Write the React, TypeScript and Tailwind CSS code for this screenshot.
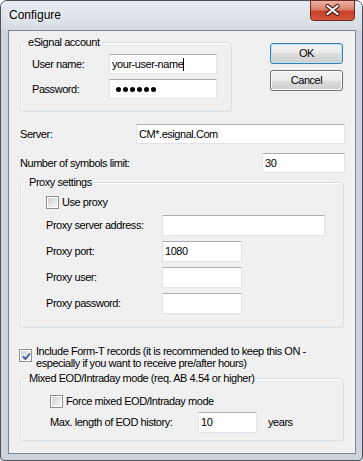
import type { ReactNode } from "react";

/**
 * Configure dialog (Windows 7 basic theme look)
 */

function TextBox({ className, children }: { className: string; children?: ReactNode }) {
  return (
    <div
      className={`flex items-center bg-white border border-[#e2e3ea] border-t-[#abadb3] px-[2px] text-black ${className}`}
    >
      {children}
    </div>
  );
}

function CheckBox({ checked = false }: { checked?: boolean }) {
  return (
    <div className="w-[13px] h-[13px] shrink-0 border border-[#8e8f8f] bg-white p-px">
      <div className="w-full h-full bg-[linear-gradient(135deg,#cdd1d6,#f6f6f6)] relative">
        {checked && (
          <svg width="11" height="11" viewBox="0 0 11 11" className="absolute inset-0">
            <path d="M2 5.5 L4.5 8 L9 2.5" fill="none" stroke="#3c5596" strokeWidth="1.8" />
          </svg>
        )}
      </div>
    </div>
  );
}

function PushButton({ label, isDefault = false }: { label: string; isDefault?: boolean }) {
  return (
    <div
      className={`w-[73px] h-[21px] rounded-[3px] border flex items-center justify-center bg-[linear-gradient(#f2f2f2_0%,#ebebeb_50%,#dddddd_50%,#cfcfcf_100%)] ${
        isDefault ? "border-[#3c7fb1] shadow-[inset_0_0_0_1px_#b6e4f9]" : "border-[#707070] shadow-[inset_0_0_0_1px_#fcfcfc]"
      }`}
    >
      {label}
    </div>
  );
}

function GroupBox({
  title,
  legendClass = "ml-[6px]",
  className,
  children,
}: {
  title: string;
  legendClass?: string;
  className: string;
  children: ReactNode;
}) {
  return (
    <fieldset className={`border border-[#d5dfe5] rounded-[3px] shadow-[inset_1px_1px_0_#fff] ${className}`}>
      <legend className={`px-[2px] leading-[13px] ${legendClass}`}>{title}</legend>
      {children}
    </fieldset>
  );
}

export default function App() {
  return (
    <div className="w-[363px] h-[461px] font-['Liberation_Sans',Arial,sans-serif] text-[11px] leading-[13px] tracking-[-0.45px] text-black">
      <div className="w-full h-full border border-[#4b5058] rounded-t-[7px] rounded-b-[4px] bg-[#ccd3da] flex flex-col">
        {/* Title bar */}
        <div className="h-[29px] flex justify-between rounded-t-[6px] bg-[linear-gradient(#e7ecf1,#d5dbe2)]">
          <div className="pl-[8px] self-center text-[12px] leading-[15px] tracking-normal [text-shadow:0_0_6px_#fff,0_0_10px_#fff]">
            Configure
          </div>
          <div className="-mt-px mr-[7px] w-[45px] h-[21px] rounded-b-[4px] border border-[#6b2b21] bg-[linear-gradient(#eab3a6_0%,#dd806c_45%,#c8402a_55%,#d3583e_100%)]">
            <svg width="43" height="19" viewBox="0 0 43 19">
              <path d="M16.5 5 L26.5 13 M26.5 5 L16.5 13" stroke="#4a1c14" strokeWidth="4.2" strokeLinecap="round" />
              <path d="M16.5 5 L26.5 13 M26.5 5 L16.5 13" stroke="#ffffff" strokeWidth="2.2" strokeLinecap="round" />
            </svg>
          </div>
        </div>

        {/* Client area */}
        <div className="ml-[7px] w-[348px] h-[424px] border border-[#7b8794] bg-[#f0f0f0] flex flex-col">
          {/* Account + buttons */}
          <div className="flex items-start mt-[5px]">
            <GroupBox title="eSignal account" legendClass="ml-[5px]" className="ml-[11px] w-[212px]">
              <div className="pt-[5px] pl-[11px] pb-[12px] flex flex-col gap-[5px]">
                <div className="flex items-center h-[20px]">
                  <div className="w-[77px]">User name:</div>
                  <TextBox className="w-[108px] h-[20px]">
                    <span>your-user-name</span>
                    <span className="w-px h-[13px] bg-black" />
                  </TextBox>
                </div>
                <div className="flex items-center h-[20px]">
                  <div className="w-[77px]">Password:</div>
                  <TextBox className="w-[108px] h-[20px] pl-[6px] gap-[2px]">
                    {[0, 1, 2, 3, 4, 5].map((i) => (
                      <div key={i} className="w-[5px] h-[5px] rounded-full bg-black" />
                    ))}
                  </TextBox>
                </div>
              </div>
            </GroupBox>
            <div className="ml-[38px] mt-[7px] flex flex-col gap-[6px]">
              <PushButton label="OK" isDefault />
              <PushButton label="Cancel" />
            </div>
          </div>

          {/* Server */}
          <div className="flex items-center mt-[12px] ml-[11px]">
            <div className="w-[116px]">Server:</div>
            <TextBox className="w-[209px] h-[20px]">CM*.esignal.Com</TextBox>
          </div>

          {/* Symbols limit */}
          <div className="flex items-center mt-[9px] ml-[11px]">
            <div className="w-[242px]">Number of symbols limit:</div>
            <TextBox className="w-[83px] h-[20px]">30</TextBox>
          </div>

          {/* Proxy settings */}
          <GroupBox title="Proxy settings" className="mt-[3px] ml-[11px] w-[324px]">
            <div className="pt-[7px] pl-[25px] pb-[13px] flex flex-col">
              <div className="flex items-center h-[13px] gap-[3px]">
                <CheckBox />
                <span>Use proxy</span>
              </div>
              <div className="mt-[6px] flex flex-col gap-[5px]">
                <div className="flex items-center h-[21px]">
                  <div className="w-[116px]">Proxy server address:</div>
                  <TextBox className="w-[163px] h-[21px]" />
                </div>
                <div className="flex items-center h-[21px]">
                  <div className="w-[116px]">Proxy port:</div>
                  <TextBox className="w-[80px] h-[21px]">1080</TextBox>
                </div>
                <div className="flex items-center h-[21px]">
                  <div className="w-[116px]">Proxy user:</div>
                  <TextBox className="w-[80px] h-[21px]" />
                </div>
                <div className="flex items-center h-[21px]">
                  <div className="w-[116px]">Proxy password:</div>
                  <TextBox className="w-[80px] h-[21px]" />
                </div>
              </div>
            </div>
          </GroupBox>

          {/* Form-T */}
          <div className="flex items-start mt-[17px] ml-[10px]">
            <div className="mt-[4px]">
              <CheckBox checked />
            </div>
            <div className="ml-[4px] leading-[12px]">
              Include Form-T records (it is recommended to keep this ON -
              <br />
              especially if you want to receive pre/after hours)
            </div>
          </div>

          {/* Mixed EOD/Intraday */}
          <GroupBox title="Mixed EOD/Intraday mode (req. AB 4.54 or higher)" className="mt-[3px] ml-[11px] w-[324px]">
            <div className="pt-[10px] pl-[29px] pb-[7px] flex flex-col">
              <div className="flex items-center h-[13px] gap-[3px]">
                <CheckBox />
                <span>Force mixed EOD/Intraday mode</span>
              </div>
              <div className="mt-[4px] flex items-center h-[21px]">
                <div className="w-[148px]">Max. length of EOD history:</div>
                <TextBox className="w-[59px] h-[21px]">10</TextBox>
                <div className="ml-[11px]">years</div>
              </div>
            </div>
          </GroupBox>
        </div>
      </div>
    </div>
  );
}
